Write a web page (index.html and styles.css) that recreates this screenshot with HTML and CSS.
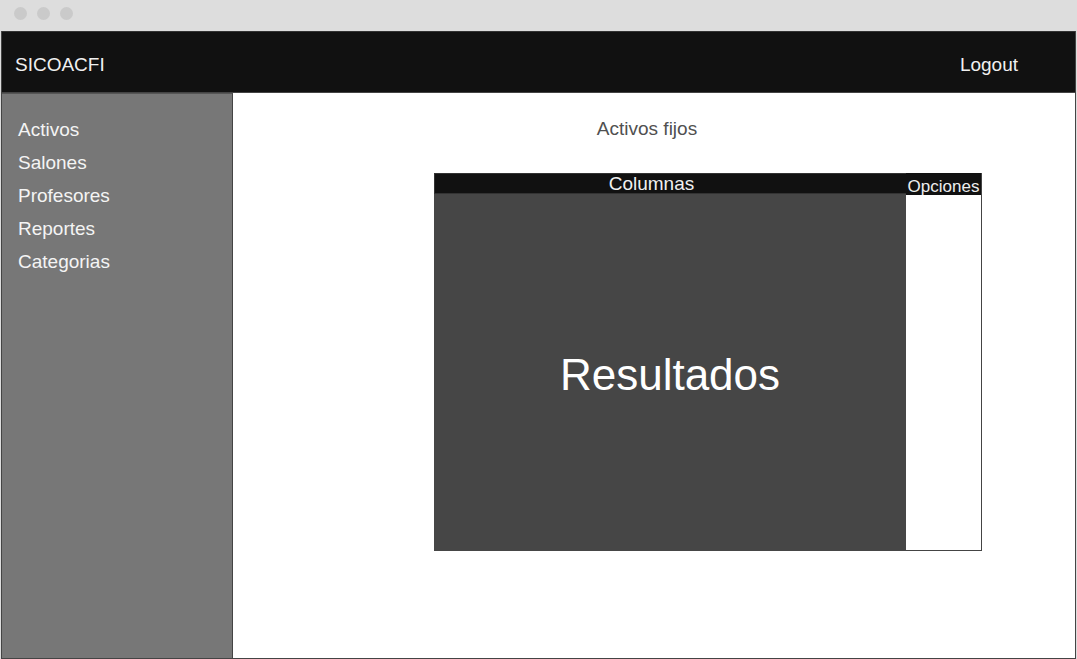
FILE: index.html
```html
<!DOCTYPE html>
<html lang="es">
<head>
<meta charset="utf-8">
<title>SICOACFI</title>
<link rel="stylesheet" href="styles.css">
</head>
<body>
<div class="chrome">
  <span class="dot"></span><span class="dot"></span><span class="dot"></span>
</div>
<div class="app">
  <header class="topbar">
    <span class="brand">SICOACFI</span>
    <span class="logout">Logout</span>
  </header>
  <div class="layout">
    <nav class="sidebar">
      <a class="nav-item">Activos</a>
      <a class="nav-item">Salones</a>
      <a class="nav-item">Profesores</a>
      <a class="nav-item">Reportes</a>
      <a class="nav-item">Categorias</a>
    </nav>
    <main class="content">
      <h1 class="title">Activos fijos</h1>
      <div class="grid">
        <div class="results">
          <div class="cols-head">Columnas</div>
          <div class="results-body">Resultados</div>
        </div>
        <div class="options">
          <div class="opt-head">Opciones</div>
        </div>
      </div>
    </main>
  </div>
</div>
</body>
</html>
```
FILE: styles.css
```css
html, body {
  margin: 0;
  padding: 0;
  height: 100%;
}
body {
  background: #dddddd;
  font-family: "Liberation Sans", Arial, sans-serif;
  overflow: hidden;
}
.chrome {
  height: 31px;
  display: flex;
  align-items: center;
  gap: 10px;
  padding-left: 14px;
  box-sizing: border-box;
  padding-bottom: 5px;
}
.dot {
  width: 13px;
  height: 13px;
  border-radius: 50%;
  background: #cacaca;
}
.app {
  margin-left: 1px;
  width: 1075px;
  height: 628px;
  box-sizing: border-box;
  border-left: 1px solid #444;
  border-right: 1px solid #444;
  border-bottom: 1px solid #444;
  display: flex;
  flex-direction: column;
  background: #fff;
}
.topbar {
  height: 62px;
  flex: none;
  box-sizing: border-box;
  background: #111;
  border-top: 1px solid #333;
  border-bottom: 1px solid #444;
  display: flex;
  align-items: center;
  justify-content: space-between;
  padding: 5px 57px 0 13px;
  color: #f0f0f0;
  font-size: 19px;
}
.layout {
  flex: 1;
  display: flex;
  min-height: 0;
}
.sidebar {
  width: 231px;
  flex: none;
  box-sizing: border-box;
  background: #777;
  border-right: 1px solid #444;
  border-top: 1px solid #555;
  display: flex;
  flex-direction: column;
  padding: 19px 0 0 16px;
}
.nav-item {
  color: #f4f4f4;
  font-size: 19px;
  line-height: 33px;
}
.content {
  flex: 1;
  display: flex;
  flex-direction: column;
}
.title {
  margin: 25px 0 0 0;
  font-size: 19px;
  font-weight: normal;
  line-height: 22px;
  color: #505050;
  text-align: center;
  padding-right: 14px;
}
.grid {
  margin: 33px 0 0 201px;
  width: 548px;
  height: 378px;
  display: flex;
}
.results {
  width: 472px;
  display: flex;
  flex-direction: column;
}
.cols-head {
  height: 21px;
  box-sizing: border-box;
  background: #111;
  border: 1px solid #333;
  border-right: none;
  color: #f0f0f0;
  font-size: 19px;
  line-height: 19px;
  text-align: center;
  padding-right: 38px;
}
.results-body {
  flex: 1;
  background: #464646;
  color: #fff;
  font-size: 44px;
  padding-top: 4px;
  display: flex;
  align-items: center;
  justify-content: center;
}
.options {
  flex: 1;
  box-sizing: border-box;
  border-right: 1px solid #444;
  border-bottom: 1px solid #444;
  display: flex;
  flex-direction: column;
}
.opt-head {
  height: 22px;
  background: #111;
  color: #eee;
  font-size: 17px;
  line-height: 27px;
  text-align: center;
}
```
